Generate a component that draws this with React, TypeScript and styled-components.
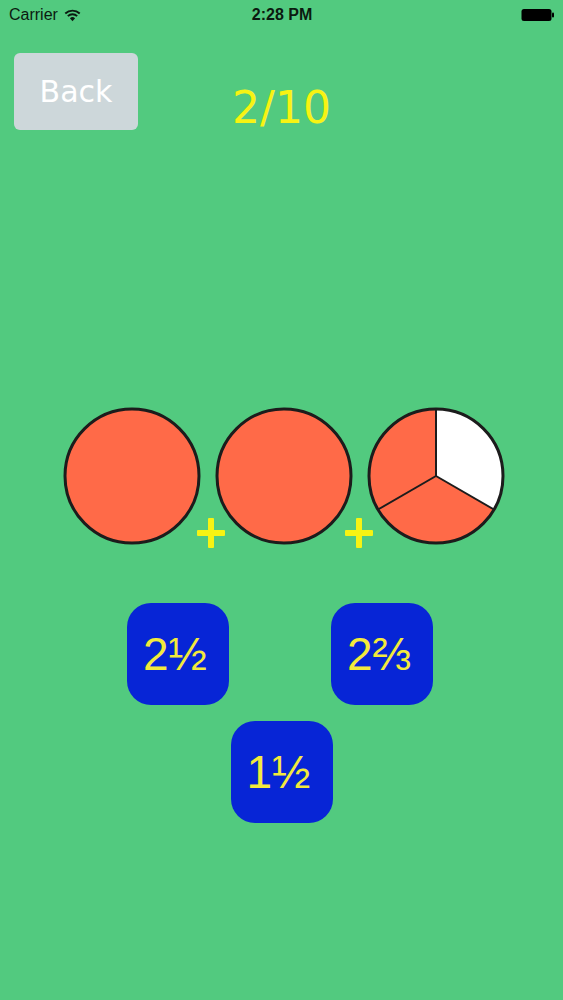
import React from "react";
import styled, { createGlobalStyle } from "styled-components";

const Global = createGlobalStyle`
  html, body {
    margin: 0;
    padding: 0;
    background: #52ca7f;
  }
  * { box-sizing: border-box; }
`;

const Screen = styled.div`
  width: 563px;
  height: 1000px;
  background: #52ca7f;
  display: flex;
  flex-direction: column;
  font-family: "Liberation Sans", Arial, sans-serif;
  overflow: hidden;
`;

const StatusBar = styled.div`
  height: 30px;
  display: grid;
  grid-template-columns: 1fr auto 1fr;
  align-items: center;
  padding: 0 8px 0 9px;
  font-size: 16px;
  color: #0b1a10;
`;

const Carrier = styled.div`
  display: flex;
  align-items: center;
  gap: 6px;
`;

const Clock = styled.div`
  font-weight: 700;
  font-size: 16px;
`;

const BatteryWrap = styled.div`
  display: flex;
  justify-content: flex-end;
`;

const Header = styled.div`
  display: grid;
  grid-template-columns: 1fr auto 1fr;
  align-items: start;
  height: 100px;
  padding: 23px 14px 0 14px;
`;

const BackButton = styled.button`
  width: 124px;
  height: 77px;
  border: none;
  border-radius: 6px;
  background: #cdd7da;
  color: #ffffff;
  font-family: "Comic Sans MS", "DejaVu Sans", sans-serif;
  font-size: 30px;
  justify-self: start;
  padding: 0;
`;

const Score = styled.div`
  font-family: "Comic Sans MS", "DejaVu Sans", sans-serif;
  color: #f7f313;
  font-size: 44px;
  line-height: 54px;
  margin-top: 28px;
`;

const Pies = styled.div`
  position: relative;
  margin: 276px auto 0;
  padding-left: 4px;
  display: flex;
  gap: 12px;
`;

const Plus = styled.div<{ $left: number }>`
  position: absolute;
  left: ${(p) => p.$left}px;
  top: 112px;
  width: 28px;
  height: 30px;
  &::before,
  &::after {
    content: "";
    position: absolute;
    background: #f7f313;
    border-radius: 1px;
  }
  &::before {
    left: 0;
    top: 12px;
    width: 28px;
    height: 6px;
  }
  &::after {
    left: 11px;
    top: 0;
    width: 6px;
    height: 30px;
  }
`;

const Answers = styled.div`
  margin-top: 57px;
  display: flex;
  flex-direction: column;
  align-items: center;
  gap: 16px;
`;

const AnswerRow = styled.div`
  display: flex;
  gap: 102px;
  margin-left: -3px;
`;

const Answer = styled.button`
  width: 102px;
  height: 102px;
  border: none;
  border-radius: 24px;
  background: #0725d6;
  color: #f3ea3c;
  font-family: "Liberation Sans", Arial, sans-serif;
  font-size: 46px;
  padding: 0 6px 0 0;
  display: flex;
  align-items: center;
  justify-content: center;
`;

const SIZE = 140;

function Pie({ fraction }: { fraction: number }) {
  const r = 67;
  const c = SIZE / 2;
  if (fraction >= 1) {
    return (
      <svg width={SIZE} height={SIZE} viewBox={`0 0 ${SIZE} ${SIZE}`}>
        <circle cx={c} cy={c} r={r} fill="#ff6a48" stroke="#1c1c1c" strokeWidth={3} />
      </svg>
    );
  }
  const pt = (deg: number) => {
    const a = ((deg - 90) * Math.PI) / 180;
    return [c + r * Math.cos(a), c + r * Math.sin(a)];
  };
  const [x0, y0] = pt(0);
  const [x1, y1] = pt(120);
  const [x2, y2] = pt(240);
  return (
    <svg width={SIZE} height={SIZE} viewBox={`0 0 ${SIZE} ${SIZE}`}>
      <circle cx={c} cy={c} r={r} fill="#ff6a48" />
      <path d={`M${c} ${c} L${x0} ${y0} A${r} ${r} 0 0 1 ${x1} ${y1} Z`} fill="#ffffff" />
      <line x1={c} y1={c} x2={x0} y2={y0} stroke="#1c1c1c" strokeWidth={2} />
      <line x1={c} y1={c} x2={x1} y2={y1} stroke="#1c1c1c" strokeWidth={2} />
      <line x1={c} y1={c} x2={x2} y2={y2} stroke="#1c1c1c" strokeWidth={2} />
      <circle cx={c} cy={c} r={r} fill="none" stroke="#1c1c1c" strokeWidth={3} />
    </svg>
  );
}

export default function App() {
  return (
    <Screen>
      <Global />
      <StatusBar>
        <Carrier>
          Carrier
          <svg width="17" height="13" viewBox="0 0 16 12">
            <path d="M8 11.5 L5.6 8.6 A3.6 3.6 0 0 1 10.4 8.6 Z" fill="#0b1a10" />
            <path d="M3.6 6.6 A6.4 6.4 0 0 1 12.4 6.6" stroke="#0b1a10" strokeWidth="1.8" fill="none" />
            <path d="M1.2 4.1 A10 10 0 0 1 14.8 4.1" stroke="#0b1a10" strokeWidth="1.8" fill="none" />
          </svg>
        </Carrier>
        <Clock>2:28 PM</Clock>
        <BatteryWrap>
          <svg width="34" height="14" viewBox="0 0 34 14">
            <rect x="0.5" y="1" width="30" height="12" rx="2.5" fill="#000" />
            <rect x="31" y="4.5" width="2" height="5" rx="1" fill="#000" />
          </svg>
        </BatteryWrap>
      </StatusBar>
      <Header>
        <BackButton>Back</BackButton>
        <Score>2/10</Score>
        <div />
      </Header>
      <Pies>
        <Pie fraction={1} />
        <Pie fraction={1} />
        <Pie fraction={2 / 3} />
        <Plus $left={139} />
        <Plus $left={287} />
      </Pies>
      <Answers>
        <AnswerRow>
          <Answer>2½</Answer>
          <Answer>2⅔</Answer>
        </AnswerRow>
        <Answer>1½</Answer>
      </Answers>
    </Screen>
  );
}
